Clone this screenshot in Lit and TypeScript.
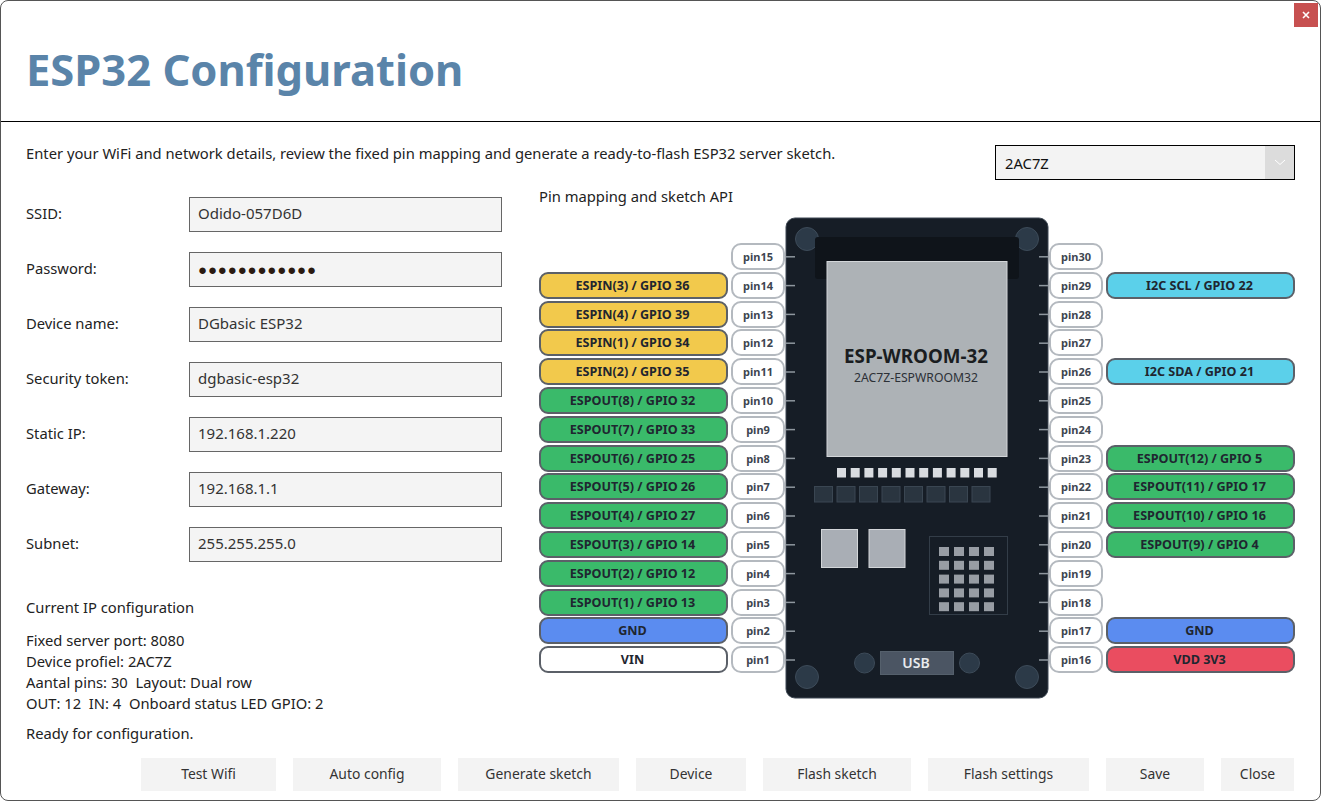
import { LitElement, html, svg, css } from "lit";
import { customElement } from "lit/decorators.js";

type Pin = { pin: string; label?: string; kind?: string };

const LEFT: Pin[] = [
  { pin: "pin15" },
  { pin: "pin14", label: "ESPIN(3) / GPIO 36", kind: "in" },
  { pin: "pin13", label: "ESPIN(4) / GPIO 39", kind: "in" },
  { pin: "pin12", label: "ESPIN(1) / GPIO 34", kind: "in" },
  { pin: "pin11", label: "ESPIN(2) / GPIO 35", kind: "in" },
  { pin: "pin10", label: "ESPOUT(8) / GPIO 32", kind: "out" },
  { pin: "pin9", label: "ESPOUT(7) / GPIO 33", kind: "out" },
  { pin: "pin8", label: "ESPOUT(6) / GPIO 25", kind: "out" },
  { pin: "pin7", label: "ESPOUT(5) / GPIO 26", kind: "out" },
  { pin: "pin6", label: "ESPOUT(4) / GPIO 27", kind: "out" },
  { pin: "pin5", label: "ESPOUT(3) / GPIO 14", kind: "out" },
  { pin: "pin4", label: "ESPOUT(2) / GPIO 12", kind: "out" },
  { pin: "pin3", label: "ESPOUT(1) / GPIO 13", kind: "out" },
  { pin: "pin2", label: "GND", kind: "gnd" },
  { pin: "pin1", label: "VIN", kind: "vin" },
];

const RIGHT: Pin[] = [
  { pin: "pin30" },
  { pin: "pin29", label: "I2C SCL / GPIO 22", kind: "i2c" },
  { pin: "pin28" },
  { pin: "pin27" },
  { pin: "pin26", label: "I2C SDA / GPIO 21", kind: "i2c" },
  { pin: "pin25" },
  { pin: "pin24" },
  { pin: "pin23", label: "ESPOUT(12) / GPIO 5", kind: "out" },
  { pin: "pin22", label: "ESPOUT(11) / GPIO 17", kind: "out" },
  { pin: "pin21", label: "ESPOUT(10) / GPIO 16", kind: "out" },
  { pin: "pin20", label: "ESPOUT(9) / GPIO 4", kind: "out" },
  { pin: "pin19" },
  { pin: "pin18" },
  { pin: "pin17", label: "GND", kind: "gnd" },
  { pin: "pin16", label: "VDD 3V3", kind: "vdd" },
];

const FIELDS = [
  ["SSID:", "Odido-057D6D"],
  ["Password:", "●●●●●●●●●●●●"],
  ["Device name:", "DGbasic ESP32"],
  ["Security token:", "dgbasic-esp32"],
  ["Static IP:", "192.168.1.220"],
  ["Gateway:", "192.168.1.1"],
  ["Subnet:", "255.255.255.0"],
];

const BUTTONS: [string, number][] = [
  ["Test Wifi", 135],
  ["Auto config", 148],
  ["Generate sketch", 161],
  ["Device", 110],
  ["Flash sketch", 148],
  ["Flash settings", 161],
  ["Save", 98],
  ["Close", 73],
];

const range = (n: number) => Array.from({ length: n }, (_, i) => i);

@customElement("app-root")
export class AppRoot extends LitElement {
  static styles = css`
    :host {
      display: block;
      width: 1321px;
      height: 801px;
      background: #fff;
      font-family: "Noto Sans", "Open Sans", sans-serif;
      font-size: 14.75px;
      color: #222;
    }
    .window {
      box-sizing: border-box;
      height: 801px;
      border: 1px solid #555;
      border-radius: 8px;
      display: flex;
      flex-direction: column;
      overflow: hidden;
    }
    .head {
      height: 120px;
      flex: none;
      border-bottom: 1px solid #000;
      display: flex;
      justify-content: space-between;
      align-items: flex-start;
      padding-left: 25px;
    }
    h1 {
      margin: 38px 0 0;
      font-size: 43.5px;
      line-height: 60px;
      font-weight: 700;
      color: #5a84a9;
    }
    .x {
      width: 24px;
      height: 24px;
      margin: 2px 2px 0 0;
      background: #c75050;
      display: flex;
      align-items: center;
      justify-content: center;
    }
    .main {
      flex: 1;
      display: grid;
      grid-template-columns: 476px 756px;
      column-gap: 37px;
      align-content: start;
      padding: 0 0 0 25px;
    }
    .intro {
      grid-column: 1 / 3;
      height: 75px;
      display: flex;
      justify-content: space-between;
      padding-top: 23px;
      box-sizing: border-box;
      line-height: 20px;
    }
    .intro span {
      margin-top: -2px;
    }
    .select {
      width: 300px;
      height: 35px;
      box-sizing: border-box;
      border: 1px solid #000;
      background: #f3f3f3;
      display: flex;
      align-items: center;
      justify-content: space-between;
      padding-left: 9px;
      color: #111;
    }
    .chev {
      width: 29px;
      height: 33px;
      background: #dcdcdc;
      display: flex;
      align-items: center;
      justify-content: center;
    }
    .form {
      display: grid;
      grid-template-columns: 163px 313px;
      grid-auto-rows: 35px;
      row-gap: 20px;
      align-items: center;
    }
    .lab {
      padding-bottom: 4px;
    }
    .field {
      height: 35px;
      box-sizing: border-box;
      border: 1px solid #666;
      background: #f4f4f4;
      display: flex;
      align-items: center;
      padding: 0 0 4px 8px;
      font-size: 15px;
      color: #333;
    }
    .field.dots {
      letter-spacing: 0.85px;
      padding-bottom: 2px;
      color: #2b1a10;
    }
    .info {
      margin-top: 35px;
      line-height: 21px;
    }
    .info p {
      margin: 0;
    }
    .info .gap {
      margin-bottom: 12px;
    }
    .info .gap2 {
      margin-top: 9px;
    }
    .panel-title {
      line-height: 20px;
      margin-top: -11px;
      margin-bottom: 11px;
    }
    .map {
      display: grid;
      grid-template-columns: 246px 264px 246px;
    }
    .pins {
      display: flex;
      flex-direction: column;
      gap: 1.8px;
      padding-top: 26px;
    }
    .row {
      height: 27px;
      display: flex;
      gap: 3px;
      align-items: stretch;
    }
    .pin {
      width: 54px;
      box-sizing: border-box;
      border: 2px solid #b4b9bf;
      border-radius: 10px;
      background: #fff;
      display: flex;
      align-items: center;
      justify-content: center;
      font-size: 11px;
      font-weight: 700;
      color: #3d4550;
    }
    .tag {
      width: 189px;
      box-sizing: border-box;
      border: 2px solid #5b6068;
      border-radius: 9px;
      display: flex;
      align-items: center;
      justify-content: center;
      padding-right: 2px;
      font-size: 12.6px;
      font-weight: 700;
      color: #1f2630;
    }
    .spacer {
      width: 189px;
    }
    .in { background: #f2c94c; }
    .out { background: #3aba6a; }
    .gnd { background: #5b8cf0; }
    .vin { background: #fff; }
    .vdd { background: #ea4d60; }
    .i2c { background: #5bd0ea; }
    .board {
      display: block;
    }
    .t1 {
      font-size: 18.8px;
      font-weight: 700;
      fill: #1a1d21;
      text-anchor: middle;
    }
    .t2 {
      font-size: 12.2px;
      fill: #2c3036;
      text-anchor: middle;
    }
    .t3 {
      font-size: 14px;
      font-weight: 600;
      fill: #e8ebee;
      text-anchor: middle;
    }
    .foot {
      flex: none;
      display: flex;
      justify-content: flex-end;
      gap: 17px;
      padding: 0 26px 9px 0;
    }
    .btn {
      height: 33px;
      box-sizing: border-box;
      padding-bottom: 2px;
      background: #f3f3f3;
      display: flex;
      align-items: center;
      justify-content: center;
      font-size: 13.9px;
      color: #333;
    }
  `;

  renderRow(p: Pin, side: string) {
    const tag = p.label
      ? html`<div class="tag ${p.kind}">${p.label}</div>`
      : html`<div class="spacer"></div>`;
    const pin = html`<div class="pin">${p.pin}</div>`;
    return side === "l"
      ? html`<div class="row">${tag}${pin}</div>`
      : html`<div class="row">${pin}${tag}</div>`;
  }

  renderBoard() {
    // board coords: origin at 785,217 in the window
    const hole = (cx: number, cy: number, r: number) =>
      svg`<circle cx=${cx} cy=${cy} r=${r} fill="#2c3a48" stroke="#3d4b59" stroke-width="1"></circle>`;
    return html`<svg class="board" width="264" height="482" viewBox="0 0 264 482">
      <rect x="1" y="1" width="262" height="480" rx="9" fill="#161d26" stroke="#3f4954" stroke-width="1"></rect>
      ${hole(22, 22, 11.5)} ${hole(242, 22, 11.5)} ${hole(22, 460, 11.5)} ${hole(242, 460, 11.5)}
      <rect x="30" y="20" width="204" height="42" rx="3" fill="#0f141a"></rect>
      ${range(15).map((i) => {
        const y = 39.8 + i * 28.8;
        return svg`<line x1="1" x2="10" y1=${y} y2=${y} stroke="#8f979f" stroke-width="1.5"></line>
          <line x1="254" x2="263" y1=${y} y2=${y} stroke="#8f979f" stroke-width="1.5"></line>`;
      })}
      <rect x="42" y="44.5" width="180" height="195" fill="#adb2b6" stroke="#d3d6d9" stroke-width="1"></rect>
      <text class="t1" x="131" y="146">ESP-WROOM-32</text>
      <text class="t2" x="131" y="165">2AC7Z-ESPWROOM32</text>
      ${range(12).map(
        (i) => svg`<rect x=${52 + i * 13.7} y="251" width="9" height="9.5" fill="#d9dce0"></rect>`
      )}
      ${range(8).map(
        (i) =>
          svg`<rect x=${29.5 + i * 22.5} y="269.5" width="18" height="15.5" fill="#2a3540" stroke="#3a4652" stroke-width="1"></rect>`
      )}
      <rect x="36.5" y="312.5" width="36" height="38" fill="#a9aeb5" stroke="#d3d6d9" stroke-width="1"></rect>
      <rect x="84" y="312.5" width="36" height="38" fill="#a9aeb5" stroke="#d3d6d9" stroke-width="1"></rect>
      <rect x="144.5" y="319.5" width="78" height="78" fill="none" stroke="#333d48" stroke-width="1"></rect>
      ${range(5).map((r) =>
        range(4).map(
          (c) =>
            svg`<rect x=${154 + c * 15} y=${330 + r * 13.8} width="10" height="9" fill="#989da4"></rect>`
        )
      )}
      <circle cx="79.5" cy="446" r="10" fill="#2c3a48" stroke="#3d4b59"></circle>
      <circle cx="184.5" cy="446" r="10" fill="#2c3a48" stroke="#3d4b59"></circle>
      <rect x="95.5" y="434.5" width="73" height="23" fill="#4b5563" stroke="#55606c"></rect>
      <text class="t3" x="131" y="451">USB</text>
    </svg>`;
  }

  render() {
    return html`<div class="window">
      <div class="head">
        <h1>ESP32 Configuration</h1>
        <div class="x">
          <svg width="8" height="8" viewBox="0 0 8 8">
            <path d="M1 1L7 7M7 1L1 7" stroke="#fff" stroke-width="1.6"></path>
          </svg>
        </div>
      </div>
      <div class="main">
        <div class="intro">
          <span>Enter your WiFi and network details, review the fixed pin mapping and generate a ready-to-flash ESP32 server sketch.</span>
          <div class="select">
            2AC7Z
            <div class="chev">
              <svg width="12" height="7" viewBox="0 0 12 7">
                <path d="M1 1L6 5.5L11 1" fill="none" stroke="#fff" stroke-width="1"></path>
              </svg>
            </div>
          </div>
        </div>
        <div class="left">
          <div class="form">
            ${FIELDS.map(
              ([k, v]) => html`<div class="lab">${k}</div>
                <div class="field ${k === "Password:" ? "dots" : ""}">${v}</div>`
            )}
          </div>
          <div class="info">
            <p class="gap">Current IP configuration</p>
            <p>Fixed server port: 8080</p>
            <p>Device profiel: 2AC7Z</p>
            <p>Aantal pins: 30&nbsp; Layout: Dual row</p>
            <p>OUT: 12&nbsp; IN: 4&nbsp; Onboard status LED GPIO: 2</p>
            <p class="gap2">Ready for configuration.</p>
          </div>
        </div>
        <div class="right">
          <div class="panel-title">Pin mapping and sketch API</div>
          <div class="map">
            <div class="pins l">${LEFT.map((p) => this.renderRow(p, "l"))}</div>
            ${this.renderBoard()}
            <div class="pins r">${RIGHT.map((p) => this.renderRow(p, "r"))}</div>
          </div>
        </div>
      </div>
      <div class="foot">
        ${BUTTONS.map(
          ([t, w]) => html`<div class="btn" style="width:${w}px">${t}</div>`
        )}
      </div>
    </div>`;
  }
}
